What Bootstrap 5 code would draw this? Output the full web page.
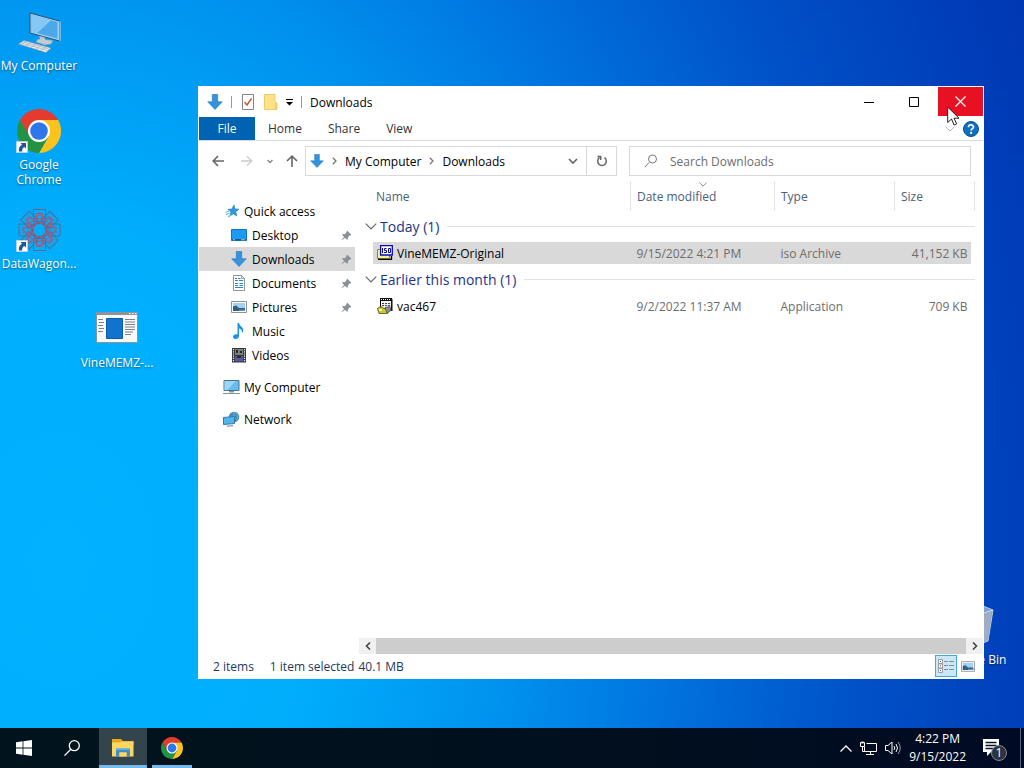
<!DOCTYPE html>
<html lang="en">
<head>
    <meta charset="UTF-8">
    <meta name="viewport" content="width=device-width, initial-scale=1.0">
    <title>Downloads</title>
    <link href="https://cdn.jsdelivr.net/npm/bootstrap@5.3.0/dist/css/bootstrap.min.css" rel="stylesheet">
    <script src="https://cdn.jsdelivr.net/npm/bootstrap@5.3.0/dist/js/bootstrap.bundle.min.js"></script>
    <style>
        body {
            font-family: "Open Sans", "Noto Sans", sans-serif;
            font-size: 12px;
            line-height: 15px;
            color: #000;
        }
        svg {
            display: block;
            flex-shrink: 0;
        }
        button {
            border: 0;
            padding: 0;
            background: none;
            color: inherit;
        }
        a {
            color: inherit;
            text-decoration: none;
        }

        /* Desktop */
        .desktop {
            background: radial-gradient(ellipse 1050px 1400px at 60px 560px, #00b2ff 0, #00aefc 24%, #0094ef 42%, #0070dd 60%, #0052c8 76%, #003fba 92%, #0038b2 100%);
        }
        .shortcut {
            width: 78px;
            height: 99px;
            padding-top: 10px;
            color: #fff;
            text-align: center;
            text-shadow: 0 1px 2px rgba(0, 0, 0, 0.5);
        }
        .shortcut svg {
            margin: 0 auto 4px;
        }
        .spot-vine {
            left: 78px;
            top: 297px;
        }
        .spot-bin {
            right: 10px;
            bottom: 35px;
        }

        /* Explorer window */
        .explorer {
            inset: 86px 40px 49px 198px;
            padding: 1px;
            background: #fff;
        }
        .title-bar {
            height: 30px;
        }
        .quick-tools {
            gap: 8px;
            padding-left: 8px;
        }
        .v-line {
            width: 1px;
            height: 12px;
            background: #999;
        }
        .win-btn {
            width: 45px;
            height: 29px;
        }
        .win-close {
            margin-left: 2px;
            background: #e81123;
        }
        .ribbon {
            height: 24px;
            border-bottom: 1px solid #dadbdc;
            color: #333;
        }
        .ribbon .nav-link {
            padding: 4px 13px;
            line-height: 15px;
            color: inherit;
        }
        .ribbon .file-tab {
            width: 56px;
            padding: 4px 0;
            text-align: center;
            background: #0063b1;
            color: #fff;
        }
        .ribbon-toggle {
            color: #bbb;
        }
        .address-row {
            height: 40px;
            padding-right: 12px;
        }
        .nav-arrows {
            width: 106px;
            padding: 0 7px 0 13px;
        }
        .address-box {
            flex: 312 1 312px;
            height: 30px;
            margin-right: 12px;
            border: 1px solid #d9d9d9;
        }
        .address-box a {
            padding: 0 8px;
        }
        .search-box {
            flex: 342 1 342px;
            height: 30px;
            gap: 12px;
            padding-left: 14px;
            border: 1px solid #d9d9d9;
        }
        .search-box input {
            border: 0;
            outline: 0;
            padding: 0;
            background: none;
        }
        .search-box input::placeholder {
            color: #6d6d6d;
            opacity: 1;
        }
        .refresh {
            width: 30px;
            height: 28px;
            border-left: 1px solid #d9d9d9;
        }
        .side-pane {
            width: 156px;
            flex-shrink: 0;
            padding-top: 18px;
        }
        .side-pane a {
            display: flex;
            align-items: center;
            height: 24px;
            gap: 5px;
            padding: 0 3px 0 32px;
        }
        .side-pane a.top-item {
            gap: 4px;
            padding-left: 24px;
        }
        .side-pane a.active {
            background: #d9d9d9;
        }

        /* File list */
        .file-pane {
            min-width: 0;
        }
        .file-list {
            padding: 0 8px 0 18px;
        }
        .file-list table {
            table-layout: fixed;
            margin: 0;
            --bs-table-bg: transparent;
        }
        .col-date {
            width: 144px;
        }
        .col-type {
            width: 120px;
        }
        .col-size {
            width: 77px;
        }
        .col-end {
            width: 3px;
        }
        .file-list th,
        .file-list td {
            padding: 0 0 0 6px;
            height: 22px;
            font-weight: 400;
            vertical-align: middle;
            color: #6d6d6d;
            white-space: nowrap;
        }
        .file-list thead th {
            height: 30px;
            color: #4c607a;
            border-right: 1px solid #e5e5e5;
        }
        .file-list thead th:first-child {
            padding-left: 3px;
        }
        .file-list tr.picked td {
            background: #d9d9d9;
        }
        .file-list th.group-head {
            height: 31px;
            padding: 0;
            font-size: 14px;
            color: #1e3287;
        }
        .group-head div {
            margin-left: -8px;
            gap: 3px;
        }
        .group-head svg {
            color: #666;
        }
        .group-head .rule {
            flex: 1;
            height: 1px;
            margin: 0 0 0 5px;
            background: #e2e2e2;
        }
        .file-list td:first-child {
            padding-left: 4px;
            color: #000;
        }
        .file-list td:nth-child(4) {
            padding: 0 4px 0 0;
            text-align: right;
        }
        .sort-mark {
            left: 68px;
            top: 1px;
            color: #777;
        }
        .scroll-row {
            height: 16px;
            margin-left: 4px;
            background: #f0f0f0;
        }
        .scroll-row button {
            width: 17px;
        }
        .scroll-row .thumb {
            flex: 1;
            background: #cdcdcd;
        }
        .status-row {
            height: 24px;
            padding-left: 14px;
            color: #1e395b;
        }
        .view-btn {
            width: 22px;
            height: 22px;
        }
        .view-btn.on {
            background: #cbe8f6;
            border: 1px solid #4aa5d8;
        }
        .pointer {
            right: 64px;
            top: 106px;
        }

        /* Taskbar */
        .taskbar {
            height: 40px;
            background: linear-gradient(90deg, #01141d, #010f1e 60%, #010a24);
            color: #fff;
        }
        .task-btn {
            width: 48px;
            height: 40px;
        }
        .task-btn.open {
            border-bottom: 3px solid #76b9ed;
            padding-top: 3px;
        }
        .task-btn.front {
            margin: 0 5px 0 3px;
            background: #34444d;
        }
        .task-btn.slim {
            width: 40px;
        }
        .clock {
            line-height: 18px;
        }
        .notify {
            margin: 0 12px 0 8px;
        }
        .show-desktop {
            width: 4px;
            border-left: 1px solid #5b6577;
        }
    </style>
</head>
<body class="vh-100 overflow-hidden d-flex flex-column">

    <!-- Shared icons -->
    <svg width="0" height="0" class="position-absolute">
        <symbol id="chrome" viewBox="2 2 44 44">
            <path fill="#e33b2e" d="M4.950 13A22 22 0 0 1 43.050 13H24V24L14.500 29.500z"/>
            <path fill="#fcc31e" d="M43.050 13A22 22 0 0 1 24 46L33.500 29.500 24 24V13z"/>
            <path fill="#229342" d="M24 46A22 22 0 0 1 4.950 13L14.500 29.500 24 24 33.500 29.500z"/>
            <circle cx="24" cy="24" r="11" fill="#fff"/>
            <circle cx="24" cy="24" r="8.800" fill="#2f76ea"/>
        </symbol>
        <symbol id="shortcut-arrow" viewBox="0 0 12 12">
            <path fill="#fff" stroke="#b8c4d0" stroke-width=".6" d="M.3.3h11.400v11.400H.3z"/>
            <path fill="#28539c" d="M4.500 2H10v5.500L8.300 6C6.500 7 6 8.500 6.200 10.500H3C2.300 7.500 3.500 5 6 3.800z"/>
        </symbol>
        <symbol id="down" viewBox="0 0 16 16">
            <path fill="#3592dc" stroke="#1f77bf" stroke-width=".6" d="M5.300.5h5.400v7.300h4.600L8 15.500.7 7.800h4.600z"/>
        </symbol>
        <symbol id="pin" viewBox="0 0 12 12">
            <path fill="#8b9094" d="M7 .8l4.300 4.300-1 .9-.7-.2-2 2.100.1 2-1 .8-2.300-2.200L.8 11.300.5 11l2.800-3.500L1.200 5.300l.9-.9 2 .1 2-2L5.900 1.800z"/>
        </symbol>
        <symbol id="chev-down" viewBox="0 0 10 6">
            <path fill="none" stroke="currentColor" d="M.5.5L5 5 9.500.5"/>
        </symbol>
        <symbol id="chev-right" viewBox="0 0 5 8">
            <path fill="none" stroke="#777" stroke-width="1.300" d="M.8.7L4 4 .8 7.300"/>
        </symbol>
        <symbol id="picture" viewBox="0 0 16 12">
            <path fill="#fff" stroke="#8a929a" d="M.5.5h15v11H.5z"/>
            <path fill="#a5d0ef" d="M2 2h12v8H2z"/>
            <path fill="#2f5f86" d="M2 10V5.500l3-1 3 2.500h6v3z"/>
            <path fill="#5c92b8" d="M8 8.500h6V10H8z"/>
        </symbol>
    </svg>

    <main class="desktop flex-grow-1 position-relative">
        <div class="d-flex flex-column align-items-start">
            <a href="#" class="shortcut">
                <svg width="44" height="44" viewBox="0 0 44 44">
                    <path fill="#9fd0f3" stroke="#27506f" d="M13 3L42.500 11V31L13 23z"/>
                    <path fill="#4ba9e9" d="M14.500 5L40.500 12V28.500L14.500 21.800z"/>
                    <path fill="#86c8f5" d="M14.500 5L34 10.300 20 23.200 14.500 21.800z"/>
                    <path fill="#d4dbe1" d="M42.500 11l1 .8v19l-1 .5z"/>
                    <path fill="#c2ccd4" stroke="#8394a0" stroke-width=".5" d="M22 26l6 1.500v2l8 1-2 3.500-6 1-9-3 1.500-2.500 2.500-.5z"/>
                    <path fill="#eef1f3" stroke="#8496a3" stroke-width=".6" d="M1.500 34L7 30.500l27 7.500-5 4.500z"/>
                    <path fill="none" stroke="#a3afb8" stroke-width=".8" d="M4 33l26.500 7.500M6.500 31.800L32 39M9 31l-4.500 3.500M14 32.500l-5 3.500M19 34l-5 3.500M24 35.500l-5 3.500M29 37l-5 3.500"/>
                </svg>
                My Computer
            </a>
            <a href="#" class="shortcut">
                <svg width="46" height="44" viewBox="0 0 46 44">
                    <use href="#chrome" x="1" y="0" width="44" height="44"/>
                    <use href="#shortcut-arrow" x="0" y="32" width="12" height="12"/>
                </svg>
                Google<br>Chrome
            </a>
            <a href="#" class="shortcut">
                <svg width="46" height="44" viewBox="0 0 46 44">
                    <g fill="none" stroke="#5d6890">
                        <g id="tile">
                            <path d="M17.500 1.500h12v12h-12z"/>
                            <path stroke="#a5587a" d="M20.500 5.500h6v5h-6zM17.500 13.500l6-8 6 8M19 15.500h9"/>
                        </g>
                        <use href="#tile" transform="rotate(45 23.500 22)"/>
                        <use href="#tile" transform="rotate(90 23.500 22)"/>
                        <use href="#tile" transform="rotate(135 23.500 22)"/>
                        <use href="#tile" transform="rotate(180 23.500 22)"/>
                        <use href="#tile" transform="rotate(225 23.500 22)"/>
                        <use href="#tile" transform="rotate(270 23.500 22)"/>
                        <use href="#tile" transform="rotate(315 23.500 22)"/>
                    </g>
                    <circle cx="23.500" cy="22" r="7" fill="none" stroke="#b04a62" stroke-width="2" stroke-dasharray="3 2"/>
                    <use href="#shortcut-arrow" x="0" y="32" width="12" height="12"/>
                </svg>
                DataWagon...
            </a>
        </div>

        <a href="#" class="shortcut spot-vine position-absolute">
            <svg width="44" height="44" viewBox="0 0 44 44">
                <path fill="#f7f8f9" stroke="#8d9499" d="M1.500 5.500h41v30h-41z"/>
                <path fill="#8d9499" d="M1 5h42v3H1z"/>
                <path fill="#fff" d="M34 6h1.500v1H34zM37 6h1.500v1H37zM40 6h1.500v1H40z"/>
                <path fill="#1273cf" stroke="#0a5cab" d="M11.500 11.500h16v20h-16z"/>
                <path stroke="#7b8288" d="M3 12.500h5M4 15.500h5M3 18.500h5M4 21.500h5M3 24.500h5M30 12.500h10M30 15h10M30 17.500h10M30 20h10M30 22.500h10M30 25h8M30 27.500h6"/>
            </svg>
            VineMEMZ-...
        </a>

        <a href="#" class="shortcut spot-bin position-absolute">
            <svg width="44" height="44" viewBox="0 0 44 44">
                <path fill="#7ea0d2" stroke="#b9c8df" d="M4 5l6-3h20l10 4-5 31-8 3H13l-4-3z"/>
                <path fill="#9eacc4" d="M28 11l11-4-5 29.500-6 2z"/>
                <path fill="none" stroke="#d4deed" d="M4 5l7 5h17l12-4"/>
            </svg>
            Recycle Bin
        </a>

        <section class="explorer position-absolute d-flex flex-column">
            <header class="title-bar d-flex">
                <div class="quick-tools d-flex align-items-center flex-grow-1">
                    <svg width="16" height="16"><use href="#down"/></svg>
                    <span class="v-line"></span>
                    <button type="button" aria-label="Properties">
                        <svg width="16" height="18" viewBox="0 0 16 18">
                            <path fill="#fff" stroke="#848484" d="M2.500 1.500h11v15h-11z"/>
                            <path fill="none" stroke="#c25a2c" stroke-width="1.400" d="M4.500 9l2.500 3 4.500-6.500"/>
                        </svg>
                    </button>
                    <button type="button" aria-label="New folder">
                        <svg width="14" height="16" viewBox="0 0 14 16">
                            <path fill="#ffe188" stroke="#eac356" stroke-width=".8" d="M.5.5h10.500v7l2 2v6H.5z"/>
                            <path fill="#f4cd62" d="M11 9.500l2-1v7h-2z"/>
                        </svg>
                    </button>
                    <button type="button" aria-label="Customize toolbar">
                        <svg width="7" height="8" viewBox="0 0 7 8"><path d="M0 1h7v1H0zM0 4h7L3.500 7.500z"/></svg>
                    </button>
                    <span class="v-line"></span>
                    <span>Downloads</span>
                </div>
                <button type="button" class="win-btn" aria-label="Minimize">
                    <svg class="mx-auto" width="10" height="10" viewBox="0 0 10 10"><path stroke="#000" d="M0 5.500h10"/></svg>
                </button>
                <button type="button" class="win-btn" aria-label="Maximize">
                    <svg class="mx-auto" width="10" height="10" viewBox="0 0 10 10"><path fill="none" stroke="#000" d="M.5.5h9v9h-9z"/></svg>
                </button>
                <button type="button" class="win-btn win-close" aria-label="Close">
                    <svg class="mx-auto" width="11" height="11" viewBox="0 0 11 11"><path stroke="#fff" stroke-width="1.200" d="M.5.5l10 10M10.500.5l-10 10"/></svg>
                </button>
            </header>

            <nav class="ribbon nav flex-nowrap">
                <a href="#" class="nav-link file-tab">File</a>
                <a href="#" class="nav-link">Home</a>
                <a href="#" class="nav-link">Share</a>
                <a href="#" class="nav-link">View</a>
                <button type="button" class="ribbon-toggle ms-auto me-2" aria-label="Expand the ribbon">
                    <svg width="10" height="6"><use href="#chev-down"/></svg>
                </button>
                <button type="button" class="me-1" aria-label="Help">
                    <svg width="16" height="16" viewBox="0 0 16 16">
                        <circle cx="8" cy="8" r="7.500" fill="#0f6fc1" stroke="#0a4f91"/>
                        <path fill="none" stroke="#fff" stroke-width="1.700" d="M5.500 6.200C5.500 3.200 10.600 3.300 10.500 6 10.500 7.600 8.100 7.800 8.100 9.600"/>
                        <circle cx="8.100" cy="11.900" r="1.100" fill="#fff"/>
                    </svg>
                </button>
            </nav>

            <div class="address-row d-flex align-items-center">
                <div class="nav-arrows d-flex align-items-center justify-content-between">
                    <button type="button" aria-label="Back">
                        <svg width="12" height="12" viewBox="0 0 12 12"><path fill="none" stroke="#666" stroke-width="1.600" d="M12 6H1.500M6 1L1.200 6 6 11"/></svg>
                    </button>
                    <button type="button" class="ms-1" aria-label="Forward" disabled>
                        <svg width="12" height="12" viewBox="0 0 12 12"><path fill="none" stroke="#ccc" stroke-width="1.300" d="M0 6h10.500M6 1.500L10.800 6 6 10.500"/></svg>
                    </button>
                    <button type="button" aria-label="Recent locations">
                        <svg width="6" height="5" viewBox="0 0 6 5"><path fill="none" stroke="#888" stroke-width="1.500" d="M.5 1L3 3.500 5.500 1"/></svg>
                    </button>
                    <button type="button" aria-label="Up">
                        <svg width="12" height="12" viewBox="0 0 12 12"><path fill="none" stroke="#666" stroke-width="1.600" d="M6 12V1.500M1 6L6 1.200 11 6"/></svg>
                    </button>
                </div>
                <div class="address-box d-flex align-items-center">
                    <svg class="ms-1 me-2" width="14" height="16"><use href="#down"/></svg>
                    <svg width="5" height="8"><use href="#chev-right"/></svg>
                    <a href="#">My Computer</a>
                    <svg width="5" height="8"><use href="#chev-right"/></svg>
                    <a href="#">Downloads</a>
                    <button type="button" class="ms-auto me-2" aria-label="Previous locations">
                        <svg width="10" height="8" viewBox="0 0 10 8"><path fill="none" stroke="#666" stroke-width="1.600" d="M1 2l4 4 4-4"/></svg>
                    </button>
                    <button type="button" class="refresh" aria-label="Refresh">
                        <svg class="mx-auto" width="12" height="12" viewBox="0 0 12 12"><path fill="none" stroke="#666" stroke-width="1.500" d="M8.500 2.700A4.300 4.300 0 1 1 3.500 2.700M1.500 1.500H4.700V5"/></svg>
                    </button>
                </div>
                <label class="search-box d-flex align-items-center">
                    <svg width="14" height="14" viewBox="0 0 14 14"><path fill="none" stroke="#777" d="M5 8.500L1 13"/><circle cx="8.500" cy="5" r="4" fill="none" stroke="#777"/></svg>
                    <input type="search" class="flex-grow-1" placeholder="Search Downloads" aria-label="Search Downloads">
                </label>
            </div>

            <div class="d-flex flex-grow-1">
                <nav class="side-pane">
                    <a href="#" class="top-item">
                        <svg width="17" height="16" viewBox="0 0 17 16">
                            <path fill="#2b9be5" stroke="#1a72b4" stroke-width=".6" d="M11 2l1 4 4 .2-3.300 2.500 1.100 4.300-3.500-2.200L6.900 13l1.100-4.200-3.200-2.400 4-.3z"/>
                            <path stroke="#6fb8ea" stroke-width="1.200" d="M2.500 9.500L6 8M3 12l3.500-2M5 14l3-2"/>
                        </svg>
                        Quick access
                    </a>
                    <a href="#">
                        <svg width="16" height="16" viewBox="0 0 16 16">
                            <path fill="#1d9bf2" stroke="#1274bb" d="M.5 2.500h15v11H.5z"/>
                            <path fill="#0b5b9a" d="M1 12h14v1.500H1z"/>
                            <path stroke="#d5ecfb" stroke-width=".8" d="M2 12.800h2M10 12.800h4"/>
                        </svg>
                        Desktop
                        <svg class="ms-auto" width="11" height="11"><use href="#pin"/></svg>
                    </a>
                    <a href="#" class="active">
                        <svg width="16" height="16"><use href="#down"/></svg>
                        Downloads
                        <svg class="ms-auto" width="11" height="11"><use href="#pin"/></svg>
                    </a>
                    <a href="#">
                        <svg width="16" height="16" viewBox="0 0 16 16">
                            <path fill="#fff" stroke="#8d959c" d="M2.500.5h8l3 3v12h-11z"/>
                            <path fill="#d9e2e9" stroke="#8d959c" stroke-width=".7" d="M10.500.5v3h3z"/>
                            <path fill="none" stroke="#2d86c7" d="M4 3.500h2M7 3.500h2.500M4 5.500h3M8 5.500h4M4 8.500h3M8.500 8.500H12M4 10.500h3M8.500 10.500H12M4 12.500h8"/>
                        </svg>
                        Documents
                        <svg class="ms-auto" width="11" height="11"><use href="#pin"/></svg>
                    </a>
                    <a href="#">
                        <svg width="16" height="12"><use href="#picture"/></svg>
                        Pictures
                        <svg class="ms-auto" width="11" height="11"><use href="#pin"/></svg>
                    </a>
                    <a href="#">
                        <svg width="16" height="16" viewBox="0 0 16 16">
                            <path fill="#1c93de" d="M6.500 0H8c.3 3 4.500 4 4.200 7.500-.1 1.300-.8 2.300-1.400 2.800C11.500 7.500 10 6 8 5.300V13c0 2-1.700 3-3.500 3S2 15 2 13.800c0-1.700 2.200-3 4.500-2.500z"/>
                        </svg>
                        Music
                    </a>
                    <a href="#">
                        <svg width="16" height="16" viewBox="0 0 16 16">
                            <path fill="#34363c" d="M1 1h14v14.500H1z"/>
                            <path fill="#7b8275" d="M4 2h8v6H4z"/>
                            <path fill="#55599c" d="M4 9h8v5.500H4z"/>
                            <path fill="#272a2d" d="M5 3h2v3H5zM9 4h2v2H9zM6 9h4v2H6z"/>
                            <path stroke="#eee" stroke-width="1.200" stroke-dasharray="1.200 1" d="M2.500 2v13M13.500 2v13"/>
                        </svg>
                        Videos
                    </a>
                    <a href="#" class="top-item mt-2">
                        <svg width="17" height="16" viewBox="0 0 17 16">
                            <path fill="#68bdf0" stroke="#49748f" d="M1 1.500h15v10H1z"/>
                            <path fill="#9bd6f7" d="M1.500 2h11l-8 9h-3z"/>
                            <path fill="#8095a2" d="M6 12h5v1.500H6z"/>
                            <path stroke="#82939e" d="M0 14.500h17"/>
                        </svg>
                        My Computer
                    </a>
                    <a href="#" class="top-item mt-2">
                        <svg width="17" height="16" viewBox="0 0 17 16">
                            <circle cx="11" cy="6" r="5.300" fill="#4a8fbb"/>
                            <path fill="none" stroke="#8fb0c4" stroke-width=".7" d="M11 1v10M13.500 1.500q3 4.500 0 9"/>
                            <path fill="#56b4ed" stroke="#2a7bac" d="M.5 6.500L11.500 5.500v7L.5 13.500z"/>
                            <path stroke="#627d8e" d="M4 15.200l6-.5"/>
                        </svg>
                        Network
                    </a>
                </nav>

                <div class="file-pane flex-grow-1 d-flex flex-column">
                    <div class="file-list flex-grow-1">
                        <table class="table table-borderless">
                            <colgroup>
                                <col>
                                <col class="col-date">
                                <col class="col-type">
                                <col class="col-size">
                                <col class="col-end">
                            </colgroup>
                            <thead>
                                <tr>
                                    <th scope="col">Name</th>
                                    <th scope="col" class="position-relative">
                                        Date modified
                                        <svg class="sort-mark position-absolute" width="8" height="5"><use href="#chev-down"/></svg>
                                    </th>
                                    <th scope="col">Type</th>
                                    <th scope="col" colspan="2">Size</th>
                                </tr>
                            </thead>
                            <tbody>
                                <tr>
                                    <th class="group-head" colspan="5" scope="rowgroup">
                                        <div class="d-flex align-items-center">
                                            <svg width="12" height="7"><use href="#chev-down"/></svg>
                                            Today (1)<span class="rule"></span>
                                        </div>
                                    </th>
                                </tr>
                                <tr class="picked">
                                    <td>
                                        <div class="d-flex align-items-center gap-1">
                                            <svg width="16" height="16" viewBox="0 0 16 16">
                                                <path fill="#f1f1a0" stroke="#8c8c18" d="M.5 4.500h3v-2h9v11H.5z"/>
                                                <path fill="none" stroke="#000" stroke-width="1.300" d="M1 14.300h13.500V11"/>
                                                <path fill="#fff" stroke="#0a0ab0" stroke-width="1.300" d="M3.600.7h11.700v9.300H3.600z"/>
                                                <path fill="none" stroke="#0a0ab0" d="M5.500 3v5M9.500 3.500H7.500v2h2v2h-2.500M11.500 3.500h2v4h-2z"/>
                                            </svg>
                                            VineMEMZ-Original
                                        </div>
                                    </td>
                                    <td>9/15/2022 4:21 PM</td>
                                    <td>iso Archive</td>
                                    <td>41,152 KB</td>
                                </tr>
                                <tr>
                                    <th class="group-head" colspan="5" scope="rowgroup">
                                        <div class="d-flex align-items-center">
                                            <svg width="12" height="7"><use href="#chev-down"/></svg>
                                            Earlier this month (1)<span class="rule"></span>
                                        </div>
                                    </th>
                                </tr>
                                <tr>
                                    <td>
                                        <div class="d-flex align-items-center gap-1">
                                            <svg width="16" height="16" viewBox="0 0 16 16">
                                                <path fill="#f2f2f2" stroke="#000" d="M3.500 1.500h11v10h-11z"/>
                                                <path fill="#111" d="M3 0h12v3H3zM14 1h1.500v12H14z"/>
                                                <path stroke="#fff" stroke-dasharray="1 1" d="M4 1.500h10"/>
                                                <path stroke="#444" stroke-dasharray="2 1" d="M5 5.500h8M5 7.500h8"/>
                                                <path fill="#c4c832" stroke="#4b4d10" stroke-width=".8" d="M.5 10.500l2-1.500h3l1 1.500h4l2 1.500-2 3.500H2z"/>
                                                <path fill="#8b8f93" stroke="#333" stroke-width=".6" d="M8 9.500l5-1 1 4-4 2.500z"/>
                                                <path fill="#f4f6a8" d="M2 11h3v2H2z"/>
                                            </svg>
                                            vac467
                                        </div>
                                    </td>
                                    <td>9/2/2022 11:37 AM</td>
                                    <td>Application</td>
                                    <td>709 KB</td>
                                </tr>
                            </tbody>
                        </table>
                    </div>
                    <div class="scroll-row d-flex">
                        <button type="button" aria-label="Scroll left">
                            <svg class="mx-auto" width="6" height="8" viewBox="0 0 6 8"><path fill="none" stroke="#444" stroke-width="1.600" d="M5 .5L1.500 4 5 7.500"/></svg>
                        </button>
                        <div class="thumb"></div>
                        <button type="button" aria-label="Scroll right">
                            <svg class="mx-auto" width="6" height="8" viewBox="0 0 6 8"><path fill="none" stroke="#444" stroke-width="1.600" d="M1 .5L4.500 4 1 7.500"/></svg>
                        </button>
                    </div>
                </div>
            </div>

            <footer class="status-row d-flex align-items-center">
                <span class="me-3">2 items</span>
                <span class="me-1">1 item selected</span>
                <span>40.1 MB</span>
                <button type="button" class="view-btn on ms-auto" aria-label="Details view">
                    <svg class="mx-auto" width="16" height="14" viewBox="0 0 16 14">
                        <path fill="#fff" stroke="#888" stroke-width=".8" d="M.5.5h4v4h-4zM.5 5h4v4h-4zM.5 9.500h4v4h-4z"/>
                        <path fill="#555" d="M2 2h1v1H2zM2 6.500h1v1H2zM2 11h1v1H2z"/>
                        <path stroke="#889" d="M6 2.500h4M11 2.500h5M6 6.500h4M11 6.500h5M6 10.500h4M11 10.500h5"/>
                    </svg>
                </button>
                <button type="button" class="view-btn me-1" aria-label="Large icons view">
                    <svg class="mx-auto" width="14" height="11"><use href="#picture"/></svg>
                </button>
            </footer>
        </section>

        <svg class="pointer position-absolute" width="13" height="20" viewBox="0 0 13 20">
            <path fill="#fff" stroke="#222" d="M.7 1v15.500L4.500 13l2.600 6 2.500-1.100L7 12.200h5z"/>
        </svg>
    </main>

    <footer class="taskbar d-flex align-items-stretch">
        <button type="button" class="task-btn" aria-label="Start">
            <svg class="mx-auto" width="16" height="16" viewBox="0 0 16 16">
                <path fill="#fff" d="M0 2.200L6.600 1.300V7.600H0zM7.400 1.200L16 0V7.600H7.400zM0 8.400H6.600V14.700L0 13.800zM7.400 8.400H16V16L7.400 14.800z"/>
            </svg>
        </button>
        <button type="button" class="task-btn" aria-label="Search">
            <svg class="mx-auto" width="16" height="16" viewBox="0 0 16 16">
                <circle cx="10.300" cy="5.700" r="5" fill="none" stroke="#fff" stroke-width="1.300"/>
                <path stroke="#fff" stroke-width="1.300" d="M6.800 9.300L.5 15.600"/>
            </svg>
        </button>
        <button type="button" class="task-btn open front" aria-label="File Explorer">
            <svg class="mx-auto" width="22" height="18" viewBox="0 0 22 18">
                <path fill="#e8a81d" d="M0 0h9l2 2h10.500v4H0z"/>
                <path fill="#ffd661" d="M0 3.500h8l1.500-1H21.500V17.500H0z"/>
                <path fill="#3e8fc9" d="M4 17.500v-8h14v8h-3.500v-4h-7v4z"/>
                <path fill="#ffd661" d="M7.500 13.500h7v4h-7z"/>
                <path fill="#5eb2e4" d="M4 9.500h14v1.500H4z"/>
            </svg>
        </button>
        <button type="button" class="task-btn open slim" aria-label="Google Chrome">
            <svg class="mx-auto" width="22" height="22"><use href="#chrome"/></svg>
        </button>
        <div class="d-flex align-items-center ms-auto">
            <button type="button" class="me-2" aria-label="Show hidden icons">
                <svg width="12" height="7" viewBox="0 0 12 7"><path fill="none" stroke="#fff" stroke-width="1.300" d="M.5 6.500L6 1l5.500 5.500"/></svg>
            </button>
            <button type="button" class="me-2" aria-label="Network">
                <svg width="17" height="15" viewBox="0 0 17 15">
                    <path fill="none" stroke="#fff" d="M6.500 2.500h10v8H4.500V6M10.500 10.500v3M6 13.500h8M.5 1.500h4v4h-4zM2.500 5.500v5h2"/>
                    <path fill="#fff" d="M1.500.5h2v2h-2z"/>
                </svg>
            </button>
            <button type="button" aria-label="Volume">
                <svg width="16" height="14" viewBox="0 0 16 14">
                    <path fill="none" stroke="#fff" d="M.5 4.500h2.500l4-3.500v12L3 9.500H.5zM9 5q1.500 2 0 4M11 3q3 4 0 8"/>
                    <path fill="none" stroke="#999" d="M13 1q4.500 6 0 12"/>
                </svg>
            </button>
            <button type="button" class="clock mx-2">4:22 PM<br>9/15/2022</button>
            <button type="button" class="notify" aria-label="1 new notification">
                <svg width="26" height="26" viewBox="0 0 26 26">
                    <path fill="#fff" d="M1 4h16v13h-8l-4 4v-4H1z"/>
                    <path stroke="#0a1526" stroke-width="1.300" d="M3.500 7.500h11M3.500 10.500h11M3.500 13.500h8"/>
                    <circle cx="17" cy="18" r="7.500" fill="#2b333d" stroke="#808890"/>
                    <text x="17" y="22" font-size="12" text-anchor="middle" fill="#fff">1</text>
                </svg>
            </button>
        </div>
        <button type="button" class="show-desktop" aria-label="Show desktop"></button>
    </footer>
</body>
</html>
